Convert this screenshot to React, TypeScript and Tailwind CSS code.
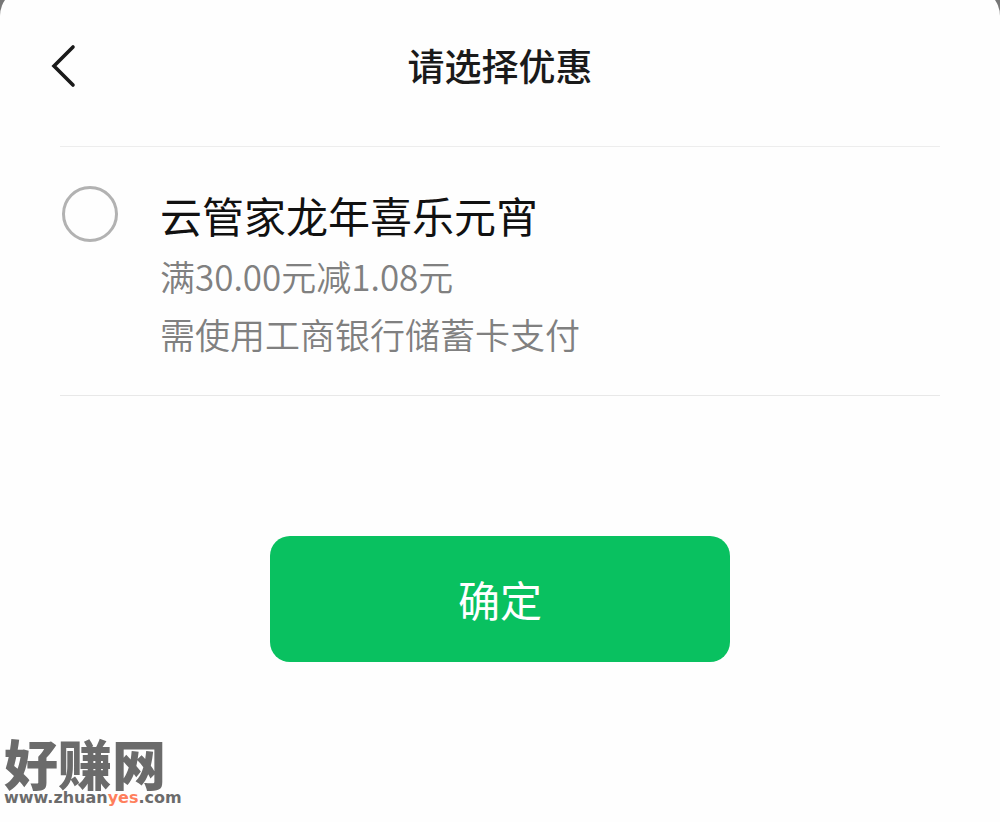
import { useState } from "react";

const offers = [
  {
    id: "lantern",
    title: "云管家龙年喜乐元宵",
    details: ["满30.00元减1.08元", "需使用工商银行储蓄卡支付"],
  },
];

function SiteMark() {
  return (
    <footer className="mt-auto pl-1 pb-4 text-[#6b6b6b]">
      <div className="text-[54px] leading-[54px] font-black">好赚网</div>
      <div className="font-['DejaVu_Sans',sans-serif] text-base leading-4 font-bold">
        www.zhuan<span className="text-[#ff7f5c]">yes</span>.com
      </div>
    </footer>
  );
}

export default function App() {
  const [selected, setSelected] = useState("");

  return (
    <div className="min-h-screen overflow-hidden bg-[#777777] font-['Noto_Sans_CJK_SC',sans-serif]">
      <main className="-mt-3 min-h-[calc(100vh+12px)] flex flex-col rounded-t-[28px] bg-[#fefefe] pt-3">
        {/* HEADER */}
        <header className="grid grid-cols-[1fr_auto_1fr] items-center px-12 pt-[38px] pb-[54px]">
          <button type="button" aria-label="返回" className="w-8 cursor-pointer">
            <svg viewBox="0 0 32 48" className="w-8 h-12" fill="none">
              <path
                d="M25 6 L6 25 L25 44"
                stroke="#1a1a1a"
                strokeWidth="3.6"
                strokeLinecap="round"
              />
            </svg>
          </button>
          <h1 className="text-[37px] leading-[54px] font-medium text-[#1a1a1a]">
            请选择优惠
          </h1>
        </header>

        {/* OFFERS */}
        <div className="mx-[60px] border-t border-[#ededed]">
          {offers.map((offer) => (
            <label
              key={offer.id}
              className="flex items-start gap-[42px] border-b border-[#e8e8e8] pt-[39px] pb-8 pl-0.5 cursor-pointer"
            >
              <input
                type="radio"
                name="offer"
                value={offer.id}
                checked={selected === offer.id}
                onChange={() => setSelected(offer.id)}
                className="size-14 shrink-0 appearance-none rounded-full border-3 border-[#b2b2b2] checked:border-[16px] checked:border-[#07c160]"
              />
              <span className="flex flex-col">
                <span className="pb-1 text-[42px] leading-[57px] text-[#111111]">
                  {offer.title}
                </span>
                {offer.details.map((line) => (
                  <span
                    key={line}
                    className="text-[35px] leading-[58px] font-[350] text-[#808080]"
                  >
                    {line}
                  </span>
                ))}
              </span>
            </label>
          ))}
        </div>

        <button
          type="button"
          className="mx-auto mt-[140px] w-[46%] rounded-[20px] bg-[#09c160] py-8 text-[42px] leading-[62px] text-white cursor-pointer"
        >
          确定
        </button>

        <SiteMark />
      </main>
    </div>
  );
}
